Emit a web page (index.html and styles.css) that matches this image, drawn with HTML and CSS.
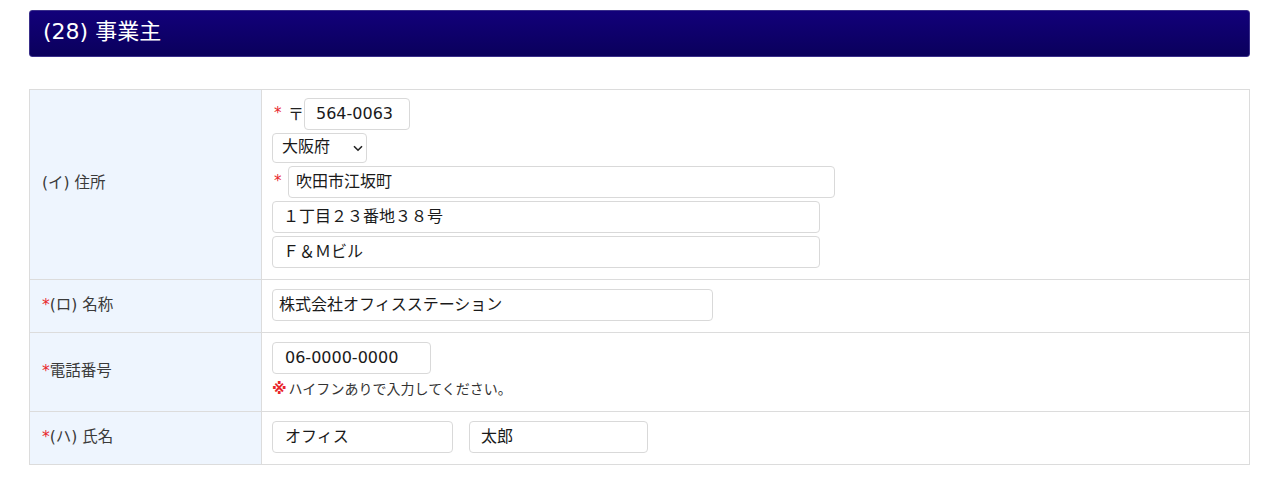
FILE: index.html
```html
<!DOCTYPE html>
<html lang="ja">
<head>
<meta charset="utf-8">
<title>事業主</title>
<link rel="stylesheet" href="styles.css">
</head>
<body>
<div class="page">
  <h2 class="section-title">(28) 事業主</h2>
  <table class="form-table">
    <tr class="row-address">
      <th>(イ) 住所</th>
      <td class="cell-address">
        <div class="stack">
          <div class="line">
            <span class="req">*</span><span class="postal-mark">〒</span><input class="input input-zip" type="text" value="564-0063">
          </div>
          <div class="line">
            <span class="select-wrap">
              <select class="select-pref"><option>大阪府</option></select>
              <svg class="chev" width="10" height="7" viewBox="0 0 10 7"><path d="M1 1.2 L5 5.2 L9 1.2" fill="none" stroke="#222" stroke-width="1.6"/></svg>
            </span>
          </div>
          <div class="line">
            <span class="req req-city">*</span><input class="input input-city" type="text" value="吹田市江坂町">
          </div>
          <div class="line">
            <input class="input input-addr" type="text" value="１丁目２３番地３８号">
          </div>
          <div class="line">
            <input class="input input-addr" type="text" value="Ｆ＆Ｍビル">
          </div>
        </div>
      </td>
    </tr>
    <tr>
      <th><span class="req-label">*</span>(ロ) 名称</th>
      <td><input class="input input-name" type="text" value="株式会社オフィスステーション"></td>
    </tr>
    <tr>
      <th><span class="req-label">*</span>電話番号</th>
      <td>
        <input class="input input-tel" type="text" value="06-0000-0000">
        <p class="note"><span class="note-mark">※</span>ハイフンありで入力してください。</p>
      </td>
    </tr>
    <tr>
      <th><span class="req-label">*</span>(ハ) 氏名</th>
      <td>
        <div class="name-pair">
          <input class="input input-last" type="text" value="オフィス">
          <input class="input input-first" type="text" value="太郎">
        </div>
      </td>
    </tr>
  </table>
</div>
</body>
</html>
```

FILE: styles.css
```css
* { box-sizing: border-box; }

html, body {
  margin: 0;
  padding: 0;
  background: #ffffff;
}

body {
  font-family: "DejaVu Sans", "Noto Sans CJK JP", sans-serif;
  color: #333333;
}

.page {
  padding: 10px 30px 0 29px;
}

.section-title {
  margin: 0;
  height: 47px;
  display: flex;
  align-items: center;
  padding: 0 13px 3px;
  background: linear-gradient(to bottom, #12007a 0%, #0a005c 100%);
  border: 1px solid #3a2f8a;
  border-radius: 3px;
  color: #ffffff;
  font-size: 22px;
  line-height: 1.2;
  font-weight: normal;
}

.form-table {
  width: 100%;
  margin-top: 32px;
  border-collapse: collapse;
  border: 1px solid #dcdcdc;
}

.form-table th,
.form-table td {
  border: 1px solid #dcdcdc;
}

.form-table th {
  width: 232px;
  background: #eef5fe;
  text-align: left;
  font-weight: normal;
  font-size: 15.5px;
  line-height: 1.2;
  color: #3a3a3a;
  padding: 0 12px 2px;
  vertical-align: middle;
}

.form-table td {
  padding: 9px 10px 11px;
  vertical-align: top;
  background: #ffffff;
}

.form-table td.cell-address {
  padding-top: 8px;
}

.req-label {
  color: #e8262b;
}

.stack {
  display: flex;
  flex-direction: column;
  gap: 3px;
}

.line {
  display: flex;
  align-items: center;
}

.req {
  color: #e8262b;
  font-size: 15px;
  width: 16px;
  padding-left: 2px;
  padding-bottom: 3px;
}

.postal-mark {
  width: 16px;
  font-size: 16px;
  color: #222;
  padding-bottom: 2px;
}

.input {
  height: 32px;
  border: 1px solid #d9d9d9;
  border-radius: 4px;
  background: #ffffff;
  font-family: "DejaVu Sans", "Noto Sans CJK JP", sans-serif;
  font-size: 16px;
  color: #1a1a1a;
  padding: 0 7px 4px;
  margin: 0;
  outline: none;
}

.input-zip { width: 106px; padding-left: 11px; padding-bottom: 2px; }
.input-city { width: 547px; }
.input-addr { width: 548px; padding-left: 10px; }
.input-name { width: 441px; padding-left: 6px; }
.input-tel { width: 159px; padding-left: 12px; padding-bottom: 2px; display: block; }
.input-last { width: 181px; padding-left: 12px; }
.input-first { width: 179px; padding-left: 11px; }

.select-wrap {
  position: relative;
  display: inline-block;
  width: 95px;
  height: 30px;
}

.select-pref {
  appearance: none;
  -webkit-appearance: none;
  width: 95px;
  height: 30px;
  border: 1px solid #d9d9d9;
  border-radius: 4px;
  background: #ffffff;
  font-family: "DejaVu Sans", "Noto Sans CJK JP", sans-serif;
  font-size: 16px;
  color: #1a1a1a;
  padding: 0 8px 3px 9px;
  margin: 0;
}

.chev {
  position: absolute;
  right: 4px;
  top: 12px;
  pointer-events: none;
}

.note {
  margin: 4px 0 0;
  line-height: 22px;
  font-size: 14px;
  color: #333;
}

.note-mark {
  color: #e8262b;
  font-weight: bold;
  font-size: 15px;
  margin-right: 2px;
}

.name-pair {
  display: flex;
  gap: 16px;
}
```
